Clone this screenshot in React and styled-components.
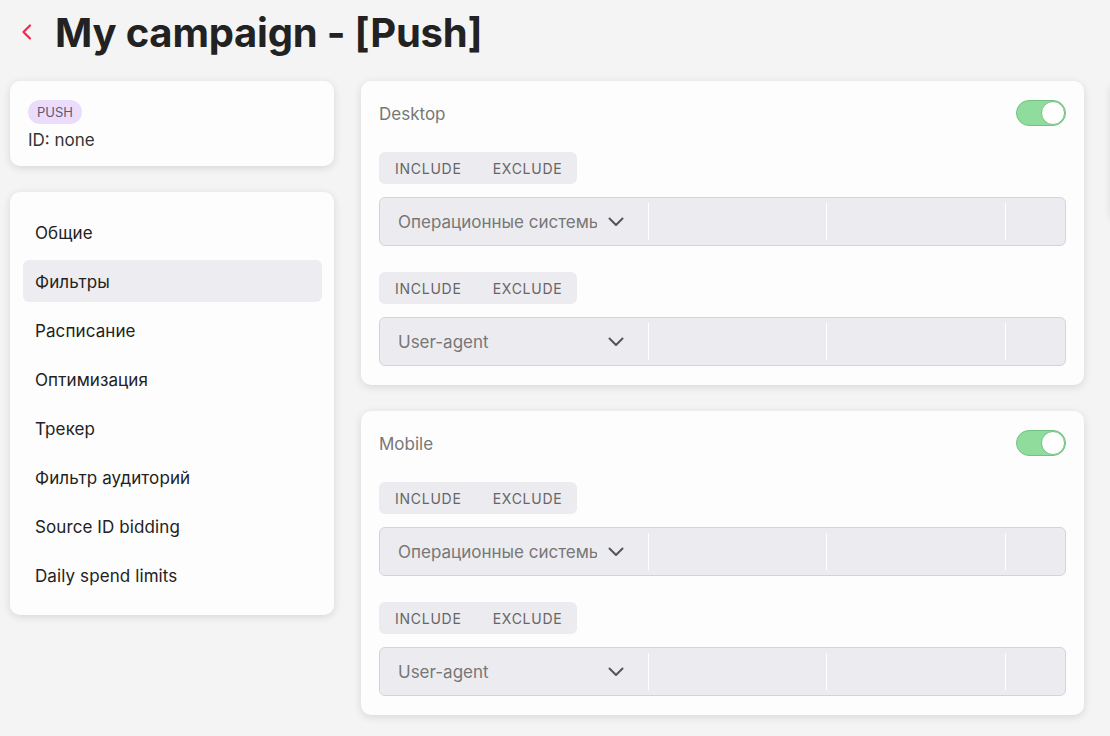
import React from "react";
import styled, { createGlobalStyle } from "styled-components";

const GlobalStyle = createGlobalStyle`
    html, body {
        margin: 0;
        padding: 0;
        background: #f4f4f4;
        font-family: Inter, "Noto Sans", sans-serif;
        color: #222;
        overflow: hidden;
    }
`

const Page = styled.div`
    width: 1110px;
    height: 736px;
    padding: 0 10px;
    box-sizing: border-box;
    overflow: hidden;
`

const Header = styled.div`
    display: flex;
    align-items: center;
    height: 64px;
    margin-bottom: 17px;
    padding-left: 10px;
    gap: 21px;
`

const BackButton = styled.button`
    border: none;
    background: none;
    padding: 0;
    display: flex;
    align-items: center;
    color: #f0284a;
    cursor: pointer;
`

const Title = styled.h1`
    margin: 0;
    font-size: 40px;
    font-weight: 700;
    letter-spacing: -0.2px;
    color: #222;
`

const Columns = styled.div`
    display: grid;
    grid-template-columns: 324px 723px 300px;
    column-gap: 27px;
    align-items: start;
`

const Stack = styled.div`
    display: flex;
    flex-direction: column;
    gap: 26px;
`

const Card = styled.div`
    background: #fdfdfd;
    border-radius: 10px;
    box-shadow: 0 2px 8px rgba(0, 0, 0, 0.12);
    padding: ${p => p.$pad || "19px 18px"};
    height: ${p => p.$h || "auto"};
    box-sizing: border-box;
`

const Badge = styled.span`
    display: inline-block;
    background: #ecdcfc;
    color: #5e5a70;
    font-size: 13px;
    line-height: 24px;
    padding: 0 9px;
    border-radius: 12px;
`

const IdLine = styled.div`
    font-size: 17px;
    color: #333;
    margin-top: 6px;
`

const Menu = styled.nav`
    display: flex;
    flex-direction: column;
    gap: 7px;
`

const MenuItem = styled.div`
    height: 42px;
    box-sizing: border-box;
    display: flex;
    align-items: center;
    padding: 1px 12px 0;
    border-radius: 6px;
    font-size: 17px;
    letter-spacing: 0.1px;
    color: #222;
    background: ${p => (p.$active ? "#ededf1" : "transparent")};
`

const CardHead = styled.div`
    display: flex;
    align-items: center;
    justify-content: space-between;
    height: 26px;
`

const CardTitle = styled.span`
    font-size: 17px;
    color: #777;
    padding-top: 2px;
`

const Toggle = styled.div`
    width: 50px;
    height: 26px;
    box-sizing: border-box;
    border-radius: 13px;
    background: #8fdc9c;
    border: 1px solid #72c283;
    position: relative;
`

const Knob = styled.span`
    position: absolute;
    right: 0;
    top: 0;
    width: 24px;
    height: 24px;
    box-sizing: border-box;
    border-radius: 50%;
    background: #fff;
    border: 1px solid #72c283;
`

const FilterBlock = styled.div`
    margin-top: 26px;
    display: flex;
    flex-direction: column;
    align-items: flex-start;
    gap: 13px;
`

const Switcher = styled.div`
    display: flex;
    height: 32px;
    background: #ebebf0;
    border-radius: 6px;
`

const SwitchOption = styled.span`
    display: flex;
    align-items: center;
    padding: 0 15px 0 16px;
    font-size: 14px;
    font-weight: 400;
    letter-spacing: 0.75px;
    color: #666;
`

const Select = styled.div`
    width: 100%;
    height: 49px;
    box-sizing: border-box;
    display: flex;
    align-items: stretch;
    background: #ececf0;
    border: 1px solid #d3d3da;
    border-radius: 6px;
`

const Cell = styled.div`
    width: ${p => p.$w}px;
    flex: ${p => (p.$grow ? 1 : "none")};
    display: flex;
    align-items: center;
    padding: ${p => p.$pad || "0"};
    box-sizing: border-box;
    border-left: ${p => (p.$first ? "none" : "1px solid #ffffff")};
`

const Divided = styled.div`
    flex: 1;
    display: flex;
    margin: 5px 0;
`

const CellText = styled.span`
    width: 199px;
    overflow: hidden;
    white-space: nowrap;
    font-size: 17px;
    color: #777;
    padding-top: 1px;
`

const Chevron = () => (
    <svg width="16" height="10" viewBox="0 0 16 10" style={{ marginLeft: 11 }}>
        <path d="M1.5 1.5 L8 8 L14.5 1.5" fill="none" stroke="#555" strokeWidth="2" strokeLinecap="round" strokeLinejoin="round" />
    </svg>
)

function Filter({ label }) {
    return (
        <FilterBlock>
            <Switcher>
                <SwitchOption>INCLUDE</SwitchOption>
                <SwitchOption>EXCLUDE</SwitchOption>
            </Switcher>
            <Select>
                <Divided>
                    <Cell $first $w={268} $pad="0 0 0 18px">
                        <CellText>{label}</CellText>
                        <Chevron />
                    </Cell>
                    <Cell $w={178} />
                    <Cell $w={179} />
                    <Cell $grow />
                </Divided>
            </Select>
        </FilterBlock>
    )
}

function Platform({ name }) {
    return (
        <Card>
            <CardHead>
                <CardTitle>{name}</CardTitle>
                <Toggle><Knob /></Toggle>
            </CardHead>
            <Filter label="Операционные системы" />
            <Filter label="User-agent" />
        </Card>
    )
}

const menu = [
    "Общие",
    "Фильтры",
    "Расписание",
    "Оптимизация",
    "Трекер",
    "Фильтр аудиторий",
    "Source ID bidding",
    "Daily spend limits",
]

export default function App() {
    return (
        <Page>
            <GlobalStyle />
            <Header>
                <BackButton>
                    <svg width="14" height="18" viewBox="0 0 14 18">
                        <path d="M10 2.5 L3.5 9 L10 15.5" fill="none" stroke="currentColor" strokeWidth="2.2" strokeLinecap="round" strokeLinejoin="round" />
                    </svg>
                </BackButton>
                <Title>My campaign - [Push]</Title>
            </Header>
            <Columns>
                <Stack>
                    <Card $h="85px">
                        <Badge>PUSH</Badge>
                        <IdLine>ID: none</IdLine>
                    </Card>
                    <Card $pad="19px 12px 19px 13px">
                        <Menu>
                            {menu.map(m => (
                                <MenuItem key={m} $active={m === "Фильтры"}>{m}</MenuItem>
                            ))}
                        </Menu>
                    </Card>
                </Stack>
                <Stack>
                    <Platform name="Desktop" />
                    <Platform name="Mobile" />
                </Stack>
                <Stack>
                    <Card $h="140px" />
                </Stack>
            </Columns>
        </Page>
    )
}
